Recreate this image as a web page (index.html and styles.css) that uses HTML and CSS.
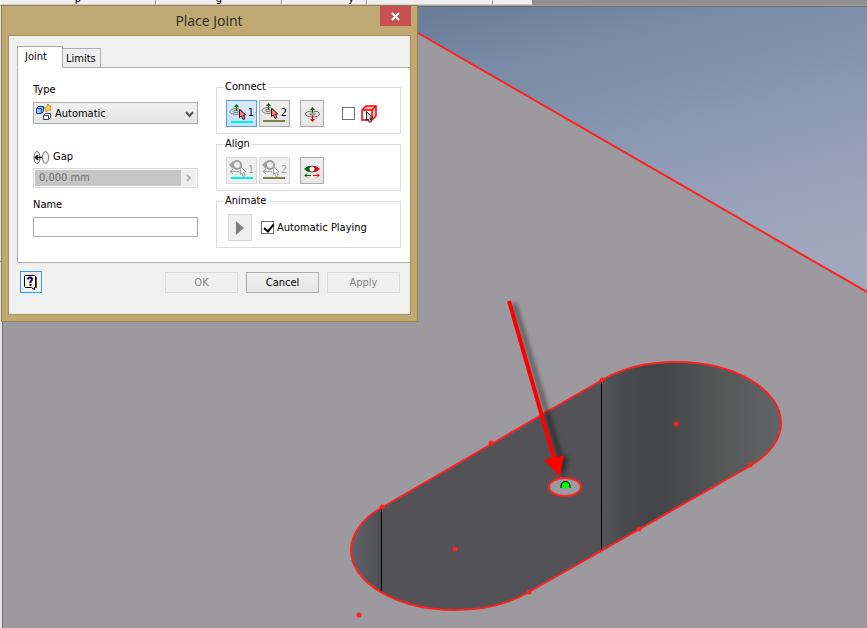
FILE: index.html
```
<!DOCTYPE html>
<html lang="en">
<head>
  <meta charset="utf-8">
  <title>Place Joint</title>
  <meta name="viewport" content="width=device-width, initial-scale=1">
  <link rel="stylesheet" href="styles.css">
</head>
<body>
  <div class="ribbon">
    <div class="panel panel_wide"><span>p</span></div>
    <div class="panel"><span>g</span></div>
    <div class="panel panel_small"><span>y</span></div>
    <div class="panel"></div>
    <div class="panel panel_last"></div>
  </div>
  <main class="viewport">
    <svg class="scene" viewBox="0 5 867 623" preserveAspectRatio="xMinYMin slice" aria-hidden="true">
      <defs>
        <linearGradient id="sky" x1="0.1" y1="0" x2="0.5" y2="1">
          <stop offset="0" stop-color="#6b7d98"/>
          <stop offset="0.2" stop-color="#788aa5"/>
          <stop offset="0.6" stop-color="#8e9bb4"/>
          <stop offset="1" stop-color="#a0a8bd"/>
        </linearGradient>
        <linearGradient id="left_end" gradientUnits="userSpaceOnUse" x1="351" y1="0" x2="381" y2="0">
          <stop offset="0" stop-color="#606468"/>
          <stop offset="1" stop-color="#4d4e52"/>
        </linearGradient>
        <linearGradient id="right_end" gradientUnits="userSpaceOnUse" x1="602" y1="0" x2="781" y2="0">
          <stop offset="0" stop-color="#535457"/>
          <stop offset="0.25" stop-color="#434447"/>
          <stop offset="0.35" stop-color="#454648"/>
          <stop offset="0.7" stop-color="#575858"/>
          <stop offset="1" stop-color="#626568"/>
        </linearGradient>
        <filter id="blur" x="-50%" y="-10%" width="200%" height="120%"><feGaussianBlur stdDeviation="2"/></filter>
      </defs>
      <rect y="5" width="867" height="623" fill="#9c9a9e"/>
      <path d="M418 6H867V292L418 33Z" fill="url(#sky)"/>
      <path d="M418 33L867 292" stroke="#ff2020" stroke-width="2"/>
      <path d="M0 5H867" stroke="#a39f90" stroke-width="2"/>
      <path d="M418 6.500H867" stroke="#6a6d70"/>
      <path d="M1 6V628" stroke="#e4e4e4" stroke-width="2"/>
      <path d="M0 261.500H2" stroke="#909090"/>
      <path d="M2.500 6V628" stroke="#707072"/>

      <!-- slot -->
      <path d="M381 508L602 380V551L529 592A104 60 0 0 1 455 610A104 60 0 0 1 381 592Z" fill="#535257"/>
      <path d="M381 508A104 60 0 0 0 351 550A104 60 0 0 0 381 592Z" fill="url(#left_end)"/>
      <path d="M602 380A105 61 0 0 1 676 362A105 61 0 0 1 781 423A105 61 0 0 1 750 466L602 551Z" fill="url(#right_end)"/>
      <path d="M381.500 508V592M601.500 380V551" stroke="#000"/>
      <path d="M381 508L602 380A105 61 0 0 1 676 362A105 61 0 0 1 781 423A105 61 0 0 1 750 466L529 592A104 60 0 0 1 455 610A104 60 0 0 1 351 550A104 60 0 0 1 381 508Z" fill="none" stroke="#ff2020" stroke-width="2"/>
      <g fill="#ff2020">
        <circle cx="382" cy="507" r="2.500"/><circle cx="491" cy="443" r="2.500"/>
        <circle cx="602" cy="380" r="2.500"/><circle cx="750" cy="465" r="2.500"/>
        <circle cx="639" cy="529" r="2.500"/><circle cx="529" cy="592" r="2.500"/>
        <circle cx="455" cy="549" r="2.500"/><circle cx="676" cy="424" r="2.500"/>
        <circle cx="359" cy="615" r="2.500"/>
      </g>
      <g filter="url(#blur)" opacity="0.4">
        <path d="M514 303L561 459" stroke="#000" stroke-width="5"/>
        <path d="M550 460L569 456L564 477Z"/>
      </g>
      <ellipse cx="565" cy="487" rx="16" ry="9" fill="#9c9a9e" stroke="#ff2020" stroke-width="2"/>
      <path d="M561 488V486A4 4 0 0 1 570 486V488Z" fill="#00ff00"/>
      <path d="M561 488V486A4 4 0 0 1 570 486V488" fill="none" stroke="#000"/>
      <path d="M509 301L554 458" stroke="#ff0000" stroke-width="4"/>
      <path d="M544 460L564 455L560 477Z" fill="#ff0000"/>
    </svg>

    <form class="dialog">
      <div class="titlebar">
        <h1>Place Joint</h1>
        <button type="button" class="close" aria-label="Close">
          <svg width="9" height="9" viewBox="0 0 9 9"><path d="M1 1L8 8M8 1L1 8" stroke="#fff" stroke-width="2"/></svg>
        </button>
      </div>
      <div class="client">
        <div class="tabs">
          <button type="button" class="tab tab_active">Joint</button>
          <button type="button" class="tab">Limits</button>
        </div>
        <div class="page">
          <div class="column">
            <label for="type">Type</label>
            <div class="select_box">
              <svg class="select_icon" width="17" height="17" viewBox="0 0 17 17">
                <path d="M1.500 4.500L3.500 2.500H8.500V7.500L6.500 9.500H1.500Z" fill="#8cc8f8" stroke="#14418c"/>
                <path d="M2 4.500H6.500V9" fill="none" stroke="#14418c"/>
                <path d="M8.500 11.500L10.500 9.500H15.500V13.500L13.500 15.500H8.500Z" fill="#fff" stroke="#333c50"/>
                <path d="M9 11.500H13.500V15" fill="none" stroke="#333c50"/>
                <path d="M13 0L14 2L16 2L15 4L16 6L13 6L11 8L11 5L9 4L12 3Z" fill="#ffe060" stroke="#e88010"/>
              </svg>
              <select id="type"><option>Automatic</option></select>
              <svg class="select_arrow" width="9" height="7" viewBox="0 0 9 7"><path d="M1 1L4.500 5L8 1" fill="none" stroke="#555" stroke-width="2"/></svg>
            </div>
            <label for="gap" class="gap_label">
              <svg width="16" height="13" viewBox="0 0 16 13">
                <g fill="none" stroke="#666"><ellipse cx="4" cy="6.500" rx="3" ry="6"/><ellipse cx="12.500" cy="6.500" rx="3" ry="6"/></g>
                <path d="M2 6.500H9M5 4L2.500 6.500L5 9" fill="none" stroke="#000" stroke-width="1.500"/>
              </svg>
              Gap
            </label>
            <div class="gap_box">
              <input id="gap" type="text" value="0,000 mm" disabled>
              <button type="button" aria-label="More" disabled><svg width="6" height="8" viewBox="0 0 6 8"><path d="M1 1L4 4L1 7" fill="none" stroke="#b0b0b0" stroke-width="2"/></svg></button>
            </div>
            <label for="name">Name</label>
            <input id="name" class="name" type="text">
          </div>

          <div class="groups">
            <fieldset>
              <legend>Connect</legend>
              <div class="row">
                <button type="button" class="tool tool_on" aria-label="First origin">
                  <svg width="29" height="25" viewBox="0 0 29 25">
                    <g fill="none" stroke="#777"><ellipse cx="9" cy="10.500" rx="6" ry="3"/><ellipse cx="9" cy="10.500" rx="3" ry="1"/></g>
                    <path d="M9.500 10V5" stroke="#006000"/><path d="M7 6L9.500 3L12 6Z" fill="#006000"/>
                    <path d="M12.500 8.500V16.500L14.500 15L16 18.500L18 17.500L16.500 14H19Z" fill="#ff8080" stroke="#401010"/>
                    <path d="M4 21H26" stroke="#00f0f0" stroke-width="2"/>
                  </svg>
                  <span>1</span>
                </button>
                <button type="button" class="tool" aria-label="Second origin">
                  <svg width="29" height="25" viewBox="0 0 29 25">
                    <g fill="none" stroke="#777"><ellipse cx="8" cy="9.500" rx="6" ry="3"/><ellipse cx="8" cy="9.500" rx="3" ry="1"/></g>
                    <path d="M8.500 9V4" stroke="#006000"/><path d="M6 5L8.500 2L11 5Z" fill="#006000"/>
                    <path d="M11.500 7.500V15.500L13.500 14L15 17.500L17 16.500L15.500 13H18Z" fill="#ff8080" stroke="#401010"/>
                    <path d="M3 20H25" stroke="#808040" stroke-width="2"/>
                  </svg>
                  <span>2</span>
                </button>
                <button type="button" class="tool tool_small" aria-label="Flip component">
                  <svg width="18" height="18" viewBox="0 0 18 18">
                    <g fill="none" stroke="#666"><ellipse cx="9.500" cy="9" rx="7" ry="3"/><ellipse cx="9.500" cy="9" rx="3" ry="1"/></g>
                    <path d="M9.500 8V4" stroke="#006000"/><path d="M7 5L9.500 2L12 5Z" fill="#006000"/>
                    <path d="M9.500 10V14" stroke="#f00"/><path d="M7 14L9.500 17L12 14Z" fill="#f00"/>
                  </svg>
                </button>
                <input type="checkbox" id="pick" class="check_pick" aria-label="Pick part first">
                <label for="pick" class="pick_label">
                  <svg width="16" height="18" viewBox="0 0 16 18">
                    <path d="M1 5L5 1H15V11L11 15H1Z" fill="#ffc8c8" stroke="#f00" stroke-width="1.500"/>
                    <path d="M1 5H11V15M11 5L15 1" fill="none" stroke="#f00" stroke-width="1.500"/>
                    <rect x="2" y="6" width="8" height="8" fill="#fff"/>
                    <path d="M5.500 6.500V15.500L7 14L8.500 17.500L10.500 16.500L9 13H11.500Z" fill="#ddd" stroke="#222"/>
                  </svg>
                </label>
              </div>
            </fieldset>
            <fieldset>
              <legend>Align</legend>
              <div class="row">
                <button type="button" class="tool" aria-label="First alignment" disabled>
                  <svg width="29" height="25" viewBox="0 0 29 25">
                    <path d="M2 7L6 3V11ZM15 7L12 4V10Z" fill="#a0a0a0"/><circle cx="10" cy="7" r="4" fill="#eee" stroke="#a0a0a0" stroke-width="2"/>
                    <path d="M3 13.500H12M6 11L3 13.500L6 16" fill="none" stroke="#a0a0a0"/>
                    <path d="M13.500 8.500V16.500L15 15L16 18.500L18 17.500L16.500 14H19Z" fill="#fff" stroke="#a0a0a0"/>
                    <path d="M4 20H26" stroke="#00f0f0" stroke-width="2"/>
                  </svg>
                  <span>1</span>
                </button>
                <button type="button" class="tool" aria-label="Second alignment" disabled>
                  <svg width="29" height="25" viewBox="0 0 29 25">
                    <path d="M2 7L6 3V11ZM15 7L12 4V10Z" fill="#a0a0a0"/><circle cx="10" cy="7" r="4" fill="#eee" stroke="#a0a0a0" stroke-width="2"/>
                    <path d="M3 13.500H12M6 11L3 13.500L6 16" fill="none" stroke="#a0a0a0"/>
                    <path d="M13.500 8.500V16.500L15 15L16 18.500L18 17.500L16.500 14H19Z" fill="#fff" stroke="#a0a0a0"/>
                    <path d="M3 20H25" stroke="#808040" stroke-width="2"/>
                  </svg>
                  <span>2</span>
                </button>
                <button type="button" class="tool tool_small" aria-label="Invert alignment">
                  <svg width="18" height="18" viewBox="0 0 18 18">
                    <path d="M1 7L5 4H8V10H5Z" fill="#006000"/><path d="M17 7L13 4H10V10H13Z" fill="#f00"/>
                    <circle cx="9" cy="7" r="3" fill="#fff" stroke="#555"/>
                    <path d="M8 13.500H2M4 11.500L2 13.500L4 15.500" fill="none" stroke="#006000"/>
                    <path d="M10 13.500H16M14 11.500L16 13.500L14 15.500" fill="none" stroke="#f00"/>
                  </svg>
                </button>
              </div>
            </fieldset>
            <fieldset>
              <legend>Animate</legend>
              <div class="row row_animate">
                <button type="button" class="tool tool_small" aria-label="Play" disabled>
                  <svg width="8" height="14" viewBox="0 0 8 14"><path d="M0 0L8 7L0 14Z" fill="#808080"/></svg>
                </button>
                <input type="checkbox" id="auto" checked>
                <label for="auto">Automatic Playing</label>
              </div>
            </fieldset>
          </div>
        </div>
        <div class="footer">
          <button type="button" class="help" aria-label="Help">
            <svg width="16" height="17" viewBox="0 0 16 17">
              <path d="M3 3H14V14H12V16L9 14H3Z" fill="#444"/>
              <path d="M2.500 1.500H11.500L12.500 2.500V12.500L11.500 13.500V15.500L8.500 13.500H2.500L1.500 12.500V2.500Z" fill="#ffffe0" stroke="#000"/>
              <path d="M5 5.500Q5 3.500 7 3.500T9 5.500Q9 6.500 7.500 7.500V9M7.500 10V12" fill="none" stroke="#000080" stroke-width="2"/>
            </svg>
          </button>
          <button type="button" class="button" disabled>OK</button>
          <button type="button" class="button">Cancel</button>
          <button type="button" class="button" disabled>Apply</button>
        </div>
      </div>
    </form>
  </main>
</body>
</html>
```
FILE: styles.css
```
* {
  box-sizing: border-box;
}
html, body {
  height: 100%;
}
body {
  margin: 0;
  display: flex;
  flex-direction: column;
  overflow: hidden;
  background-color: #9c9a9e;
  font-family: "DejaVu Sans Condensed", "DejaVu Sans", sans-serif;
  font-size: 11px;
  line-height: 14px;
  color: #000;
}
svg {
  display: block;
}
button, input, select {
  font: inherit;
  color: inherit;
  margin: 0;
  padding: 0;
}
.ribbon {
  display: flex;
  height: 5px;
  flex: none;
  background-color: #909090;
}
.panel {
  width: 126px;
  display: flex;
  align-items: flex-end;
  justify-content: center;
  overflow: hidden;
  background-color: #efefef;
  border-left: 1px solid #fff;
  border-right: 1px solid #8c8c8c;
  border-bottom: 1px solid #d0d0d0;
  line-height: 10px;
}
.panel_wide {
  width: 156px;
}
.panel_small {
  width: 85px;
  justify-content: flex-end;
  padding-right: 12px;
}
.panel_last {
  width: 40px;
}
.viewport {
  flex: 1;
  min-height: 0;
  position: relative;
}
.scene {
  width: 100%;
  height: 100%;
}

.dialog {
  position: absolute;
  top: 0;
  left: 1px;
  width: 417px;
  padding: 0 6px 6px;
  background-color: #c0a972;
  border: 1px solid #93804f;
}
.titlebar {
  display: flex;
  align-items: center;
  height: 29px;
}
h1 {
  flex: 1;
  margin: 0;
  padding-left: 30px;
  font-family: "Open Sans", sans-serif;
  font-size: 14px;
  font-weight: normal;
  line-height: 20px;
  text-align: center;
  color: #2c2a26;
}
.close {
  align-self: flex-start;
  width: 31px;
  height: 20px;
  display: flex;
  align-items: center;
  justify-content: center;
  background-color: #c75050;
  border: none;
}
.client {
  background-color: #f0f0f0;
  border: 1px solid #a8905c;
  padding: 10px 0 21px 8px;
}
.tabs {
  display: flex;
  align-items: flex-end;
  height: 22px;
}
.tab {
  height: 20px;
  width: 38px;
  padding: 2px 0 0 3px;
  text-align: left;
  background-color: #efefef;
  border: 1px solid #acacac;
  border-left: none;
}
.tab_active {
  height: 22px;
  width: 46px;
  padding: 0 0 0 7px;
  background-color: #fff;
  border-left: 1px solid #acacac;
  border-bottom-color: #fff;
  z-index: 1;
}
.page {
  display: flex;
  gap: 18px;
  margin-top: -1px;
  padding: 12px 9px 14px 15px;
  background-color: #fff;
  border: 1px solid #acacac;
  border-right: none;
}
.column {
  flex: 1;
  display: flex;
  flex-direction: column;
  padding-top: 3px;
}
.select_box {
  position: relative;
  margin: 5px 0 26px;
}
.select_box select {
  appearance: none;
  display: block;
  width: 100%;
  height: 22px;
  padding: 2px 0 0 21px;
  background-image: linear-gradient(#f1f1f1, #e4e4e4);
  border: 1px solid #acacac;
  border-radius: 0;
}
.select_icon, .select_arrow {
  position: absolute;
  pointer-events: none;
}
.select_icon {
  top: 2px;
  left: 2px;
}
.select_arrow {
  top: 9px;
  right: 4px;
}
.gap_label {
  display: flex;
  align-items: center;
  gap: 4px;
}
.gap_box {
  display: flex;
  height: 20px;
  margin: 4px 0 10px;
  padding: 1px;
  border: 1px solid #d9d9d9;
}
.gap_box input {
  flex: 1;
  min-width: 0;
  padding-left: 4px;
  background-color: #c6c6c6;
  color: #6d6d6d;
  border: none;
}
.gap_box button {
  width: 15px;
  display: flex;
  align-items: center;
  justify-content: center;
  background-color: #efefef;
  border: none;
}
.name {
  height: 20px;
  margin-top: 5px;
  padding: 0 4px;
  border: 1px solid #ababab;
}
.groups {
  width: 185px;
  display: flex;
  flex-direction: column;
  gap: 3px;
}
fieldset {
  min-width: 0;
  margin: 0;
  padding: 6px 9px 6px;
  border: 1px solid #dcdcdc;
}
legend {
  margin-left: -3px;
  padding: 0 2px;
}
.row {
  display: flex;
  align-items: center;
  gap: 2px;
}
.row_animate {
  gap: 9px;
  padding-left: 2px;
}
.row_animate label {
  margin-left: -6px;
}
.tool {
  position: relative;
  width: 31px;
  height: 27px;
  display: flex;
  align-items: center;
  justify-content: center;
  background-image: linear-gradient(#f0f0f0, #e5e5e5);
  border: 1px solid #acacac;
}
.tool span {
  position: absolute;
  right: 2px;
  top: 5px;
}
.tool:disabled {
  background: #efefef;
  border-color: #d9d9d9;
  color: #a0a0a0;
}
.tool_on {
  background-image: linear-gradient(#daecfc, #c4e0fc);
  border-color: #569de5;
}
.tool_small {
  width: 24px;
}
.tool + .tool_small {
  margin-left: 8px;
}
input[type="checkbox"] {
  appearance: none;
  width: 13px;
  height: 13px;
  background-color: #fff;
  border: 1px solid #707070;
}
input[type="checkbox"]:checked::before {
  content: "";
  display: block;
  width: 4px;
  height: 8px;
  margin: 0 0 0 4px;
  border: solid #000;
  border-width: 0 2px 2px 0;
  transform: rotate(40deg);
}
.check_pick {
  margin-left: 16px;
}
.pick_label {
  margin-left: 4px;
}
.footer {
  display: flex;
  align-items: center;
  gap: 8px;
  padding: 8px 10px 0 3px;
}
.help {
  width: 22px;
  height: 22px;
  margin-right: auto;
  display: flex;
  align-items: center;
  justify-content: center;
  background-color: #f0f0f0;
  border: 1px solid #3399ff;
}
.button {
  width: 73px;
  height: 21px;
  padding-top: 1px;
  background-image: linear-gradient(#f0f0f0, #e5e5e5);
  border: 1px solid #acacac;
}
.button:disabled {
  background: #efefef;
  border-color: #d9d9d9;
  color: #838383;
}
```
